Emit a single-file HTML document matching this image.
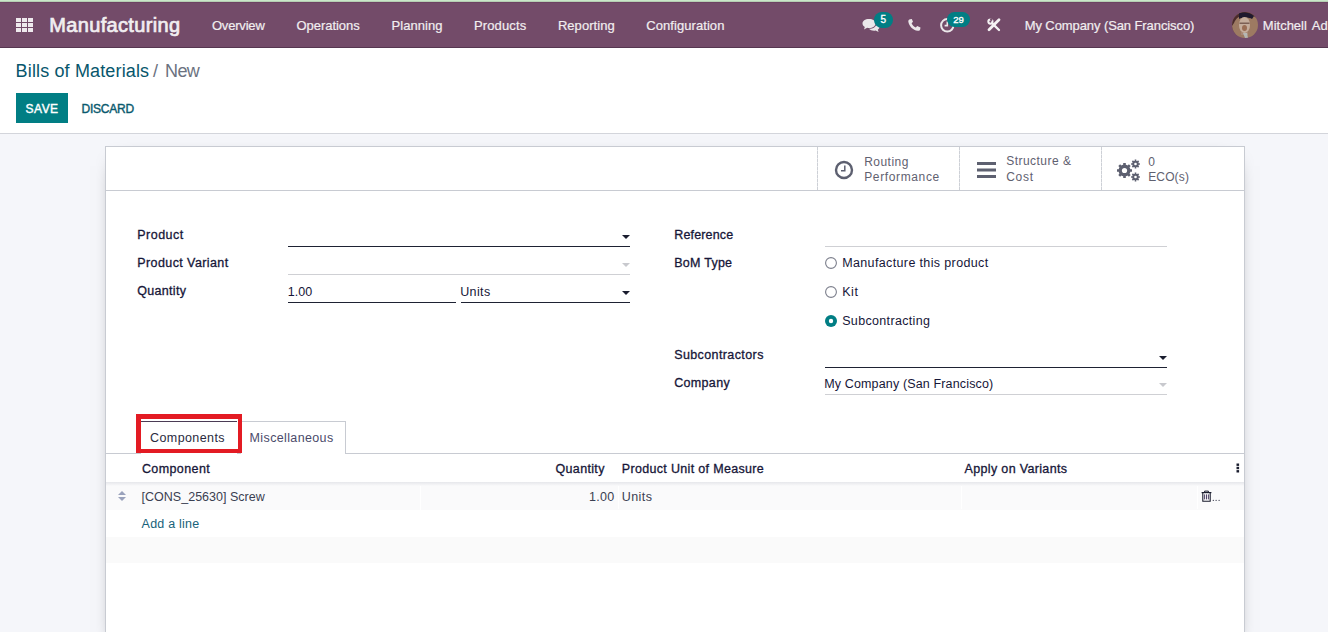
<!DOCTYPE html>
<html><head><meta charset="utf-8"><style>
html,body{margin:0;padding:0;width:1328px;height:632px;overflow:hidden;background:#f5f6fa;font-family:"Liberation Sans", sans-serif;}
.a{position:absolute;}
.t{position:absolute;white-space:pre;font-family:"Liberation Sans", sans-serif;}
</style></head><body>
<!-- top strip + navbar -->
<div class="a" style="left:0;top:0;width:1328px;height:1px;background:#c9e7c9"></div>
<div class="a" style="left:0;top:1px;width:1328px;height:1px;background:#b6ceb3"></div>
<div class="a" style="left:0;top:2px;width:1328px;height:1px;background:#6c4262"></div>
<div class="a" style="left:0;top:3px;width:1328px;height:44px;background:#734b69"></div>
<div class="a" style="left:0;top:47px;width:1328px;height:1px;background:#563650"></div>
<!-- control panel -->
<div class="a" style="left:0;top:48px;width:1328px;height:85px;background:#ffffff"></div>
<div class="a" style="left:0;top:133px;width:1328px;height:1px;background:#d3d5db"></div>
<!-- grid icon -->
<svg class="a" style="left:16px;top:18px" width="17" height="14" viewBox="0 0 17 14">
<g fill="#efeaee">
<rect x="0" y="0" width="5" height="4"/><rect x="6" y="0" width="5" height="4"/><rect x="12" y="0" width="5" height="4"/>
<rect x="0" y="5" width="5" height="4"/><rect x="6" y="5" width="5" height="4"/><rect x="12" y="5" width="5" height="4"/>
<rect x="0" y="10" width="5" height="4"/><rect x="6" y="10" width="5" height="4"/><rect x="12" y="10" width="5" height="4"/>
</g></svg>
<!-- chat icon -->
<svg class="a" style="left:862px;top:18px" width="18" height="15" viewBox="0 0 18 15">
<g fill="#ebe7ea">
<path d="M7 1 C3 1 0.5 3 0.5 5.5 C0.5 7 1.4 8.2 2.8 9 L2 11.5 L5.2 9.8 C5.8 9.9 6.4 10 7 10 C11 10 13.5 8 13.5 5.5 C13.5 3 11 1 7 1Z"/>
<path d="M14.5 5 C16.5 6 17.5 7.3 17.5 8.8 C17.5 10 16.9 11 15.8 11.7 L16.6 14 L13.6 12.5 C13 12.6 12.5 12.7 12 12.7 C9.8 12.7 8 12 7 10.8 C11.5 10.8 14.8 8.5 14.5 5Z"/>
</g></svg>
<div class="a" style="left:874px;top:12px;width:19px;height:16px;border-radius:8px;background:#017e84"></div>
<span class="t" style="left:880.6px;top:15px;font-size:10px;line-height:10px;-webkit-text-stroke:0.35px #fff;color:#fff">5</span>
<!-- phone -->
<svg class="a" style="left:908px;top:19px" width="13" height="12" viewBox="0 0 13 12">
<path fill="#ebe7ea" d="M2.2 0.3 L3.8 0 L5 2.8 L3.6 4.2 C4.3 6 5.8 7.6 7.8 8.5 L9.2 7.1 L12.5 8.4 L12.2 10.2 C12 11.3 11 12 9.8 11.8 C4.8 11 1 7 0.3 2.4 C0.2 1.4 1 0.5 2.2 0.3Z"/>
</svg>
<!-- activity clock -->
<svg class="a" style="left:940px;top:17px" width="15" height="16" viewBox="0 0 15 16">
<circle cx="7.3" cy="8.3" r="6.2" fill="none" stroke="#ebe7ea" stroke-width="2"/>
<path d="M7.3 4.5 V8.6 H4.6" fill="none" stroke="#ebe7ea" stroke-width="1.6"/>
</svg>
<div class="a" style="left:947px;top:12px;width:23px;height:15px;border-radius:7.5px;background:#017e84"></div>
<span class="t" style="left:953.3px;top:15px;font-size:9.5px;line-height:10px;-webkit-text-stroke:0.35px #fff;color:#fff;letter-spacing:0px">29</span>
<!-- tools -->
<svg class="a" style="left:984px;top:15px" width="20" height="20" viewBox="0 0 20 20">
<path d="M10 10.2 L15 15" stroke="#f4f1f3" stroke-width="2.3" stroke-linecap="round"/>
<circle cx="6.4" cy="6.6" r="2.1" fill="none" stroke="#f4f1f3" stroke-width="2"/>
<path d="M7.6 7.6 L10.4 10.4" stroke="#f4f1f3" stroke-width="2.2"/>
<circle cx="7.3" cy="4.6" r="1.3" fill="#734b69"/>
<path d="M5 14.8 L15 4.8" stroke="#f4f1f3" stroke-width="2.8" stroke-linecap="round"/>
</svg>
<!-- avatar -->
<svg class="a" style="left:1232px;top:12px" width="26" height="26" viewBox="0 0 26 26">
<defs><clipPath id="av"><circle cx="13" cy="13" r="13"/></clipPath></defs>
<g clip-path="url(#av)">
<rect width="26" height="26" fill="#9d7a62"/>
<path d="M0 0 H26 V7 C22 3 17 2 13 3 C8 3 4 6 2 11 L0 14Z" fill="#4a2a2c"/>
<path d="M7 1 C10 0 18 0 22 4 L20 7 C17 5 10 5 7 7Z" fill="#1f1a2e"/>
<ellipse cx="12.5" cy="13" rx="5.5" ry="8" fill="#c4ad9c"/>
<path d="M7.5 10.5 H17.5 V12 H7.5Z" fill="#6a4c44" opacity="0.8"/>
<ellipse cx="12.5" cy="16" rx="2.5" ry="3" fill="#9a6e55"/>
<path d="M9 19 C10 22 15 22 16 19 L16 23 H9Z" fill="#a98876"/>
<path d="M11 21 L13 26 H16 L15 21Z" fill="#b9c4c6" opacity="0.8"/>
<path d="M0 14 C1 20 4 24 8 26 H0Z" fill="#5a3430" opacity="0.7"/>
</g></svg>
<!-- save button -->
<div class="a" style="left:16px;top:93px;width:52px;height:30px;background:#017e84"></div>

<!-- sheet -->
<div class="a" style="left:105px;top:146px;width:1138px;height:500px;background:#fff;border:1px solid #c8cbd2;box-shadow:0 5px 20px -15px #000"></div>
<div class="a" style="left:106px;top:190px;width:1138px;height:1px;background:#c8cbd2"></div>
<div class="a" style="left:817px;top:147px;width:1px;height:43px;background:repeating-linear-gradient(#cdd0d6 0 3px,#e4e6ea 3px 4px)"></div>
<div class="a" style="left:959px;top:147px;width:1px;height:43px;background:repeating-linear-gradient(#cdd0d6 0 3px,#e4e6ea 3px 4px)"></div>
<div class="a" style="left:1101px;top:147px;width:1px;height:43px;background:repeating-linear-gradient(#cdd0d6 0 3px,#e4e6ea 3px 4px)"></div>
<!-- stat icons -->
<svg class="a" style="left:834px;top:160px" width="20" height="20" viewBox="0 0 20 20">
<circle cx="10" cy="10" r="8" fill="none" stroke="#5d6070" stroke-width="2.4"/>
<path d="M10.8 5.6 V10.8 H7" fill="none" stroke="#5d6070" stroke-width="1.5"/>
</svg>
<svg class="a" style="left:977px;top:162px" width="19" height="16" viewBox="0 0 19 16">
<g fill="#5d6070"><rect x="0" y="0" width="19" height="3"/><rect x="0" y="6.5" width="19" height="3"/><rect x="0" y="13" width="19" height="3"/></g>
</svg>
<svg class="a" style="left:1116px;top:159px" width="25" height="23" viewBox="0 0 25 23">
<g fill="#5d6070">
<circle cx="8.5" cy="11.5" r="6"/>
<g stroke="#5d6070" stroke-width="2.6">
<path d="M8.5 4 V19 M1 11.5 H16 M3.2 6.2 L13.8 16.8 M13.8 6.2 L3.2 16.8"/>
</g>
<circle cx="19.5" cy="5" r="3.2"/>
<circle cx="19.5" cy="18" r="3.2"/>
<g stroke="#5d6070" stroke-width="1.6">
<path d="M19.5 0.6 V9.4 M15.1 5 H23.9 M16.4 1.9 L22.6 8.1 M22.6 1.9 L16.4 8.1"/>
<path d="M19.5 13.6 V22.4 M15.1 18 H23.9 M16.4 14.9 L22.6 21.1 M22.6 14.9 L16.4 21.1"/>
</g>
</g>
<circle cx="8.5" cy="11.5" r="2.6" fill="#fff"/>
<circle cx="19.5" cy="5" r="1.3" fill="#fff"/>
<circle cx="19.5" cy="18" r="1.3" fill="#fff"/>
</svg>

<!-- field lines -->
<div class="a" style="left:288px;top:246px;width:342px;height:1px;background:#1e2233"></div>
<div class="a" style="left:288px;top:274px;width:342px;height:1px;background:#cfd0d4"></div>
<div class="a" style="left:288px;top:302px;width:168px;height:1px;background:#1e2233"></div>
<div class="a" style="left:461px;top:302px;width:169px;height:1px;background:#1e2233"></div>
<div class="a" style="left:825px;top:246px;width:342px;height:1px;background:#cfd0d4"></div>
<div class="a" style="left:825px;top:367px;width:342px;height:1px;background:#1e2233"></div>
<div class="a" style="left:825px;top:394px;width:342px;height:1px;background:#cfd0d4"></div>
<!-- carets -->
<svg class="a" style="left:622px;top:235px" width="8" height="4" viewBox="0 0 8 4"><path d="M0 0 H8 L4 4Z" fill="#1a1d2e"/></svg>
<svg class="a" style="left:622px;top:263px" width="8" height="4" viewBox="0 0 8 4"><path d="M0 0 H8 L4 4Z" fill="#c8c9ce"/></svg>
<svg class="a" style="left:622px;top:291px" width="8" height="4" viewBox="0 0 8 4"><path d="M0 0 H8 L4 4Z" fill="#1a1d2e"/></svg>
<svg class="a" style="left:1159px;top:356px" width="8" height="4" viewBox="0 0 8 4"><path d="M0 0 H8 L4 4Z" fill="#1a1d2e"/></svg>
<svg class="a" style="left:1159px;top:383px" width="8" height="4" viewBox="0 0 8 4"><path d="M0 0 H8 L4 4Z" fill="#c8c9ce"/></svg>
<!-- radios -->
<svg class="a" style="left:825px;top:257px" width="12" height="12" viewBox="0 0 12 12"><circle cx="6" cy="6" r="5.4" fill="#fff" stroke="#7c7f8c" stroke-width="1.1"/></svg>
<svg class="a" style="left:825px;top:286px" width="12" height="12" viewBox="0 0 12 12"><circle cx="6" cy="6" r="5.4" fill="#fff" stroke="#7c7f8c" stroke-width="1.1"/></svg>
<svg class="a" style="left:825px;top:315px" width="12" height="12" viewBox="0 0 12 12"><circle cx="6" cy="6" r="6" fill="#017e84"/><circle cx="6" cy="6" r="2.2" fill="#fff"/></svg>

<!-- tabs -->
<div class="a" style="left:106px;top:453px;width:1138px;height:1px;background:#c8cbd2"></div>
<div class="a" style="left:241px;top:421px;width:104px;height:32px;background:#fff;border:1px solid #c8cbd2;border-bottom:none;border-left:none"></div>
<div class="a" style="left:141px;top:421px;width:96px;height:1px;background:#4b3b55"></div>
<div class="a" style="left:141px;top:422px;width:96px;height:32px;background:#fff"></div>
<div class="a" style="left:136px;top:414px;width:97px;height:30px;border-style:solid;border-color:#e31b23;border-width:5px 4px 4px 5px"></div>

<!-- table -->
<div class="a" style="left:106px;top:482px;width:1138px;height:28px;background:#fafafb"></div>
<div class="a" style="left:106px;top:482px;width:1138px;height:4px;background:linear-gradient(#e6e7eb,rgba(249,249,250,0))"></div>
<div class="a" style="left:420px;top:486px;width:1px;height:24px;background:#fff"></div>
<div class="a" style="left:618px;top:486px;width:1px;height:23px;background:#fff"></div>
<div class="a" style="left:961px;top:486px;width:1px;height:23px;background:#fff"></div>
<div class="a" style="left:1197px;top:486px;width:1px;height:23px;background:#fff"></div>
<div class="a" style="left:106px;top:537px;width:1138px;height:26px;background:#fafafa"></div>
<!-- sort handle -->
<svg class="a" style="left:118px;top:491px" width="8" height="10" viewBox="0 0 8 10"><path d="M0 4 L4 0 L8 4Z M0 6 H8 L4 10Z" fill="#9aa2bc"/></svg>
<!-- kebab -->
<svg class="a" style="left:1236px;top:463px" width="4" height="10" viewBox="0 0 4 10"><g fill="#1a1d2e"><rect x="0.5" y="0.5" width="2.6" height="2.4"/><rect x="0.5" y="3.8" width="2.6" height="2.4"/><rect x="0.5" y="7.1" width="2.6" height="2.4"/></g></svg>
<!-- trash -->
<svg class="a" style="left:1201px;top:490px" width="20" height="13" viewBox="0 0 20 13">
<g fill="none" stroke="#1a1d2e">
<path d="M0.6 2.6 H10.4" stroke-width="1.2"/>
<path d="M3.6 2.4 V1.1 H7.4 V2.4" stroke-width="1"/>
<path d="M1.8 2.8 V11.3 H9.2 V2.8" stroke-width="1.1"/>
<path d="M3.6 4.4 V9.4 M5.5 4.4 V9.4 M7.4 4.4 V9.4" stroke-width="0.9" stroke="#3a2d55"/>
</g>
<g fill="#2a2d40"><circle cx="12.3" cy="10.3" r="0.65"/><circle cx="15.1" cy="10.3" r="0.65"/><circle cx="18.1" cy="10.3" r="0.65"/></g>
</svg>

<span class="t" style="left:49.20px;top:15px;font-size:20px;line-height:20px;font-weight:normal;color:#f1eef0;letter-spacing:0.354px;-webkit-text-stroke:0.7px #f1eef0;">Manufacturing</span>
<span class="t" style="left:211.90px;top:19px;font-size:13px;line-height:13px;font-weight:normal;color:#f1eef0;letter-spacing:-0.184px;-webkit-text-stroke:0.2px #f1eef0;">Overview</span>
<span class="t" style="left:296.50px;top:19px;font-size:13px;line-height:13px;font-weight:normal;color:#f1eef0;letter-spacing:-0.044px;-webkit-text-stroke:0.2px #f1eef0;">Operations</span>
<span class="t" style="left:391.60px;top:19px;font-size:13px;line-height:13px;font-weight:normal;color:#f1eef0;letter-spacing:0.027px;-webkit-text-stroke:0.2px #f1eef0;">Planning</span>
<span class="t" style="left:474.00px;top:19px;font-size:13px;line-height:13px;font-weight:normal;color:#f1eef0;letter-spacing:0.127px;-webkit-text-stroke:0.2px #f1eef0;">Products</span>
<span class="t" style="left:557.90px;top:19px;font-size:13px;line-height:13px;font-weight:normal;color:#f1eef0;letter-spacing:0.053px;-webkit-text-stroke:0.2px #f1eef0;">Reporting</span>
<span class="t" style="left:646.20px;top:19px;font-size:13px;line-height:13px;font-weight:normal;color:#f1eef0;letter-spacing:0.073px;-webkit-text-stroke:0.2px #f1eef0;">Configuration</span>
<span class="t" style="left:1024.70px;top:19px;font-size:13px;line-height:13px;font-weight:normal;color:#f1eef0;letter-spacing:-0.090px;-webkit-text-stroke:0.2px #f1eef0;">My Company (San Francisco)</span>
<span class="t" style="left:1262.80px;top:19px;font-size:13px;line-height:13px;font-weight:normal;color:#f1eef0;letter-spacing:0.000px;-webkit-text-stroke:0.2px #f1eef0;word-spacing:2px;">Mitchell Admin</span>
<span class="t" style="left:15.60px;top:62px;font-size:18px;line-height:18px;font-weight:normal;color:#07566c;letter-spacing:0.144px;">Bills of Materials</span>
<span class="t" style="left:153.00px;top:62px;font-size:18px;line-height:18px;font-weight:normal;color:#6b7280;letter-spacing:0.000px;">/</span>
<span class="t" style="left:165.10px;top:62px;font-size:18px;line-height:18px;font-weight:normal;color:#6b7280;letter-spacing:-0.708px;">New</span>
<span class="t" style="left:25.60px;top:103px;font-size:12px;line-height:12px;font-weight:normal;color:#ffffff;letter-spacing:0.458px;-webkit-text-stroke:0.4px #ffffff;">SAVE</span>
<span class="t" style="left:81.50px;top:103px;font-size:12px;line-height:12px;font-weight:normal;color:#0a5a6e;letter-spacing:-0.219px;-webkit-text-stroke:0.4px #0a5a6e;">DISCARD</span>
<span class="t" style="left:864.20px;top:156px;font-size:12px;line-height:12px;font-weight:normal;color:#5f6170;letter-spacing:0.471px;">Routing</span>
<span class="t" style="left:864.20px;top:171px;font-size:12px;line-height:12px;font-weight:normal;color:#5f6170;letter-spacing:0.630px;">Performance</span>
<span class="t" style="left:1006.20px;top:155px;font-size:12px;line-height:12px;font-weight:normal;color:#5f6170;letter-spacing:0.467px;">Structure &amp;</span>
<span class="t" style="left:1006.20px;top:171px;font-size:12px;line-height:12px;font-weight:normal;color:#5f6170;letter-spacing:0.771px;">Cost</span>
<span class="t" style="left:1148.20px;top:156px;font-size:12px;line-height:12px;font-weight:normal;color:#5f6170;letter-spacing:0.000px;">0</span>
<span class="t" style="left:1148.20px;top:171px;font-size:12px;line-height:12px;font-weight:normal;color:#5f6170;letter-spacing:0.140px;">ECO(s)</span>
<span class="t" style="left:137.30px;top:229px;font-size:12.5px;line-height:12.5px;font-weight:normal;color:#161638;letter-spacing:0.468px;-webkit-text-stroke:0.3px #161638;">Product</span>
<span class="t" style="left:137.30px;top:257px;font-size:12.5px;line-height:12.5px;font-weight:normal;color:#161638;letter-spacing:0.405px;-webkit-text-stroke:0.3px #161638;">Product Variant</span>
<span class="t" style="left:137.30px;top:285px;font-size:12.5px;line-height:12.5px;font-weight:normal;color:#161638;letter-spacing:0.305px;-webkit-text-stroke:0.3px #161638;">Quantity</span>
<span class="t" style="left:287.70px;top:286px;font-size:12.5px;line-height:12.5px;font-weight:normal;color:#161638;letter-spacing:0.052px;">1.00</span>
<span class="t" style="left:460.20px;top:286px;font-size:12.5px;line-height:12.5px;font-weight:normal;color:#161638;letter-spacing:0.379px;">Units</span>
<span class="t" style="left:674.20px;top:229px;font-size:12.5px;line-height:12.5px;font-weight:normal;color:#161638;letter-spacing:0.164px;-webkit-text-stroke:0.3px #161638;">Reference</span>
<span class="t" style="left:674.20px;top:257px;font-size:12.5px;line-height:12.5px;font-weight:normal;color:#161638;letter-spacing:0.262px;-webkit-text-stroke:0.3px #161638;">BoM Type</span>
<span class="t" style="left:842.20px;top:257px;font-size:12.5px;line-height:12.5px;font-weight:normal;color:#161638;letter-spacing:0.366px;">Manufacture this product</span>
<span class="t" style="left:842.20px;top:286px;font-size:12.5px;line-height:12.5px;font-weight:normal;color:#161638;letter-spacing:0.553px;">Kit</span>
<span class="t" style="left:842.20px;top:315px;font-size:12.5px;line-height:12.5px;font-weight:normal;color:#161638;letter-spacing:0.339px;">Subcontracting</span>
<span class="t" style="left:674.20px;top:349px;font-size:12.5px;line-height:12.5px;font-weight:normal;color:#161638;letter-spacing:0.394px;-webkit-text-stroke:0.3px #161638;">Subcontractors</span>
<span class="t" style="left:674.20px;top:377px;font-size:12.5px;line-height:12.5px;font-weight:normal;color:#161638;letter-spacing:0.333px;-webkit-text-stroke:0.3px #161638;">Company</span>
<span class="t" style="left:824.20px;top:378px;font-size:12.5px;line-height:12.5px;font-weight:normal;color:#161638;letter-spacing:0.147px;">My Company (San Francisco)</span>
<span class="t" style="left:150.10px;top:432px;font-size:12.5px;line-height:12.5px;font-weight:normal;color:#2a2a40;letter-spacing:0.392px;">Components</span>
<span class="t" style="left:249.60px;top:432px;font-size:12.5px;line-height:12.5px;font-weight:normal;color:#4a4a6a;letter-spacing:0.365px;">Miscellaneous</span>
<span class="t" style="left:141.90px;top:463px;font-size:12.5px;line-height:12.5px;font-weight:normal;color:#161638;letter-spacing:0.409px;-webkit-text-stroke:0.3px #161638;">Component</span>
<span class="t" style="left:555.50px;top:463px;font-size:12.5px;line-height:12.5px;font-weight:normal;color:#161638;letter-spacing:0.334px;-webkit-text-stroke:0.3px #161638;">Quantity</span>
<span class="t" style="left:621.80px;top:463px;font-size:12.5px;line-height:12.5px;font-weight:normal;color:#161638;letter-spacing:0.327px;-webkit-text-stroke:0.3px #161638;">Product Unit of Measure</span>
<span class="t" style="left:964.60px;top:463px;font-size:12.5px;line-height:12.5px;font-weight:normal;color:#161638;letter-spacing:0.335px;-webkit-text-stroke:0.3px #161638;">Apply on Variants</span>
<span class="t" style="left:141.60px;top:491px;font-size:12.5px;line-height:12.5px;font-weight:normal;color:#3a3f52;letter-spacing:0.007px;">[CONS_25630] Screw</span>
<span class="t" style="left:588.90px;top:491px;font-size:12.5px;line-height:12.5px;font-weight:normal;color:#3a3f52;letter-spacing:0.352px;">1.00</span>
<span class="t" style="left:621.80px;top:491px;font-size:12.5px;line-height:12.5px;font-weight:normal;color:#3a3f52;letter-spacing:0.404px;">Units</span>
<span class="t" style="left:141.60px;top:518px;font-size:12.5px;line-height:12.5px;font-weight:normal;color:#17627a;letter-spacing:0.221px;">Add a line</span>
</body></html>
